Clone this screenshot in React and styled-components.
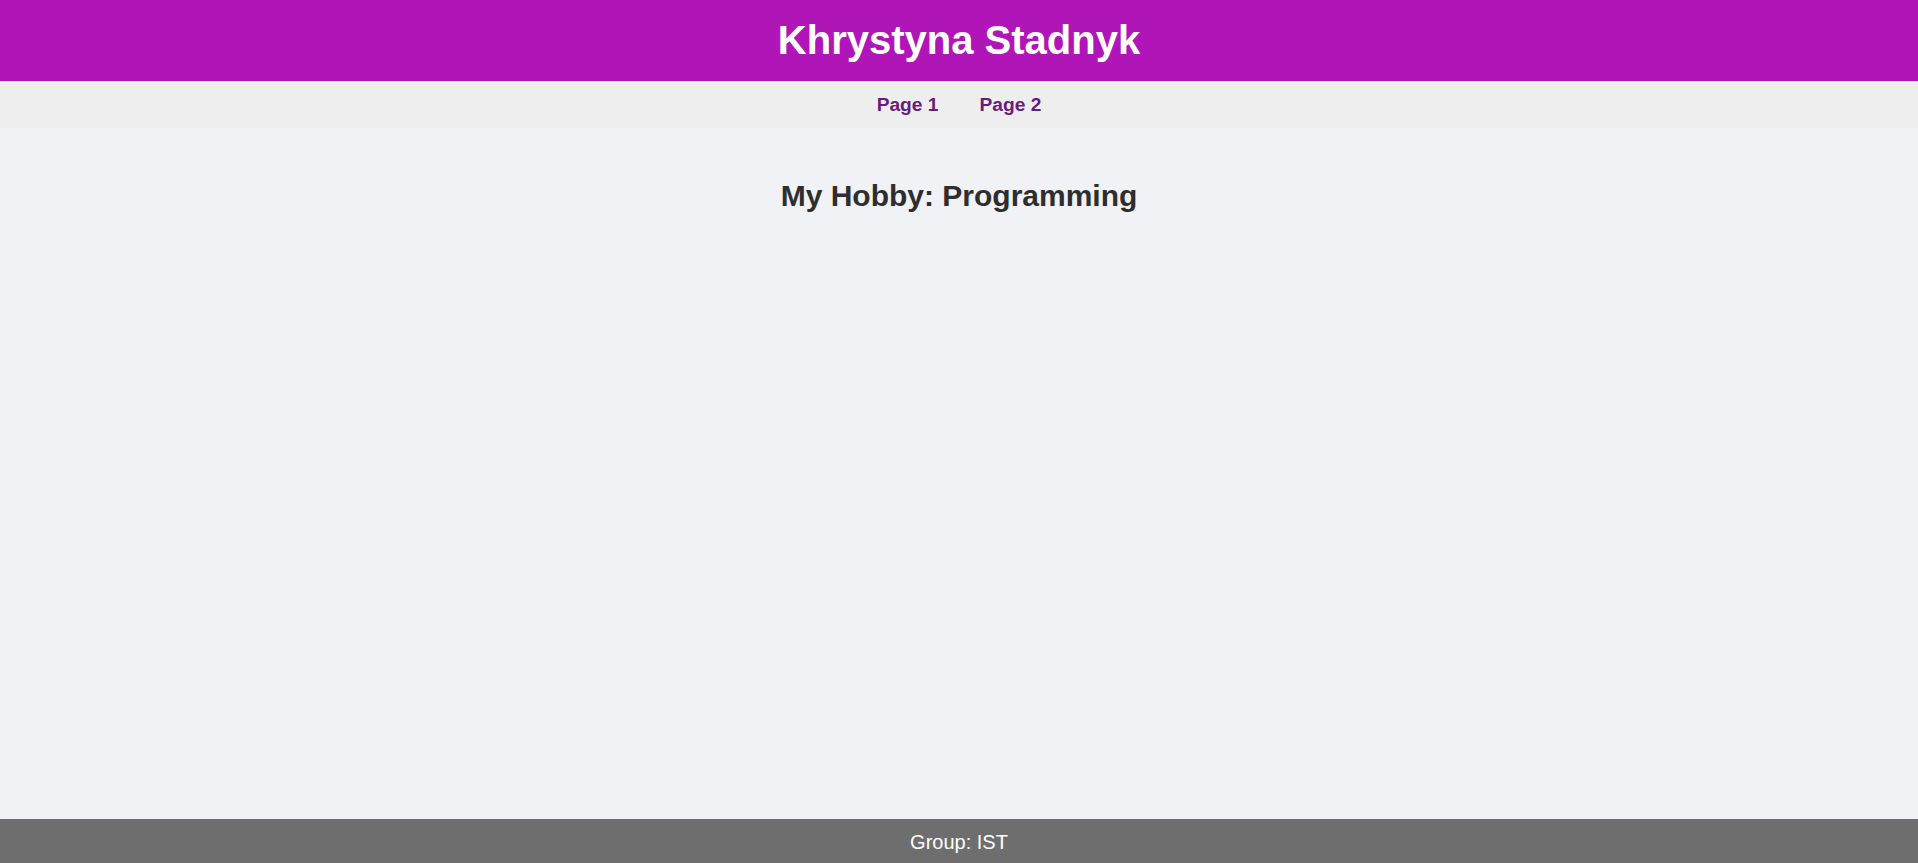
import React from "react";
import styled, { createGlobalStyle } from "styled-components";

const GlobalStyle = createGlobalStyle`
  html, body {
    margin: 0;
    padding: 0;
  }
  body {
    font-family: "Liberation Sans", Arial, sans-serif;
    background: #f0f2f5;
  }
`;

const Page = styled.div`
  min-height: 100vh;
  display: flex;
  flex-direction: column;
`;

const Header = styled.header`
  height: 81px;
  background: #b015b8;
  display: flex;
  align-items: center;
  justify-content: center;
`;

const Title = styled.h1`
  margin: 0;
  color: #fff;
  font-size: 40px;
  font-weight: bold;
`;

const Nav = styled.nav`
  height: 47px;
  background: #eeeeee;
  display: flex;
  align-items: center;
  justify-content: center;
  gap: 41px;
`;

const NavLink = styled.a`
  color: #6b1a7e;
  font-size: 19.2px;
  font-weight: bold;
  text-decoration: none;
  cursor: pointer;
`;

const Main = styled.main`
  flex: 1;
  padding: 51px 20px 20px;
  text-align: center;
`;

const Heading = styled.h2`
  margin: 0;
  font-size: 30px;
  color: #2e2e2e;
`;

const Footer = styled.footer`
  box-sizing: border-box;
  height: 44px;
  padding-top: 2px;
  background: #6e6e6e;
  color: #fff;
  font-size: 20px;
  display: flex;
  align-items: center;
  justify-content: center;
`;

const links = ["Page 1", "Page 2"];

const App = () => {
  return (
    <Page>
      <GlobalStyle />
      <Header>
        <Title>Khrystyna Stadnyk</Title>
      </Header>
      <Nav>
        {links.map((label) => (
          <NavLink key={label} href="#">
            {label}
          </NavLink>
        ))}
      </Nav>
      <Main>
        <Heading>My Hobby: Programming</Heading>
      </Main>
      <Footer>Group: IST</Footer>
    </Page>
  );
};

export default App;
